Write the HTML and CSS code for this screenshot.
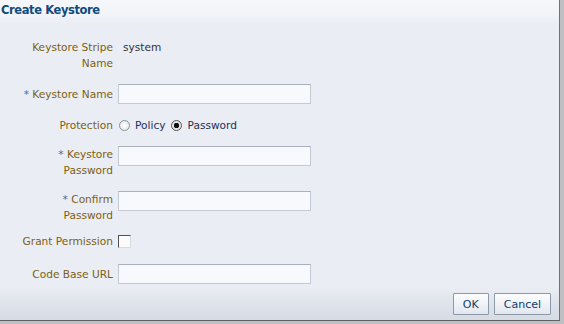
FILE: index.html
```html
<!DOCTYPE html>
<html lang="en">
<head>
  <meta charset="UTF-8">
  <title>Create Keystore</title>
  <link rel="stylesheet" href="styles.css">
</head>
<body>
  <div class="dialog">
    <div class="dialog-header">
      <h1>Create Keystore</h1>
    </div>

    <div class="form">
      <label class="label two-line">Keystore Stripe Name</label>
      <div class="value">system</div>

      <label class="label"><span class="req">*</span> Keystore Name</label>
      <div class="field"><input type="text" class="text-input"></div>

      <label class="label">Protection</label>
      <div class="field radios">
        <span class="radio"></span><span class="radio-text">Policy</span>
        <span class="radio checked"></span><span class="radio-text">Password</span>
      </div>

      <label class="label two-line"><span class="req">*</span> Keystore<br>Password</label>
      <div class="field top"><input type="password" class="text-input"></div>

      <label class="label two-line"><span class="req">*</span> Confirm<br>Password</label>
      <div class="field top"><input type="password" class="text-input"></div>

      <label class="label raised">Grant Permission</label>
      <div class="field raised"><span class="checkbox"></span></div>

      <label class="label">Code Base URL</label>
      <div class="field"><input type="text" class="text-input"></div>
    </div>

    <div class="dialog-footer">
      <button class="btn btn-ok">OK</button>
      <button class="btn">Cancel</button>
    </div>
  </div>
</body>
</html>
```

FILE: styles.css
```css
body {
  margin: 0;
  background-color: #bdbfc3;
  font-family: 'DejaVu Sans', Tahoma, sans-serif;
  font-size: 10.6px;
}
.dialog {
  width: 559px;
  height: 320px;
  display: flex;
  flex-direction: column;
  background-color: #eaedf4;
  border-right: 1px solid #6f7378;
  border-bottom: 1px solid #5f6166;
}
.dialog-header {
  height: 24px;
  background: linear-gradient(#f6f7fa, #f2f4f8 60%, #eaedf4);
}
h1 {
  margin: 0;
  padding: 3px 0 0 1px;
  font-size: 11.5px;
  font-weight: bold;
  letter-spacing: -0.4px;
  color: #0f4a7c;
  line-height: 14px;
}
.form {
  flex: 1;
  display: grid;
  grid-template-columns: 113px 193px;
  column-gap: 5px;
  row-gap: 13px;
  align-content: start;
  padding-top: 15px;
}
.label {
  text-align: right;
  color: #7d5f12;
  line-height: 16px;
  align-self: center;
}
.label.two-line {
  align-self: start;
  padding-left: 24px;
}
.raised {
  margin-top: -3px;
  margin-bottom: 2px;
}
.req {
  color: #3b6fa8;
}
.value {
  color: #333;
  line-height: 16px;
  padding-left: 5px;
}
.field {
  display: flex;
  align-items: center;
}
.field.top {
  align-self: start;
}
.text-input {
  box-sizing: border-box;
  width: 193px;
  height: 20px;
  margin: 0;
  border: 1px solid #c4cad3;
  border-top-color: #a9b0bb;
  background-color: #f8f9fc;
}
.radios {
  line-height: 16px;
  color: #23305a;
}
.radio {
  box-sizing: border-box;
  width: 11px;
  height: 11px;
  border-radius: 50%;
  border: 1px solid #8a8f96;
  background: radial-gradient(#ffffff, #dfe2e7);
  margin-left: 1px;
  margin-right: 5px;
}
.radio.checked {
  border-color: #555;
  background: radial-gradient(#111 0, #111 2.5px, #e4e6ea 3px);
}
.radio-text {
  margin-right: 5px;
}
.checkbox {
  box-sizing: border-box;
  width: 13px;
  height: 13px;
  border: 1px solid #d8dbe0;
  border-top-color: #4f5257;
  border-left-color: #4f5257;
  background-color: #fbfbfc;
}
.dialog-footer {
  height: 32px;
  display: flex;
  justify-content: flex-end;
  align-items: center;
  gap: 5px;
  padding-right: 8px;
  background: linear-gradient(#eaedf4, #e2e6ed 30%, #d6dbe4);
}
.btn {
  height: 22px;
  padding: 0 9px;
  font-family: 'DejaVu Sans', Tahoma, sans-serif;
  font-size: 11px;
  color: #0e3d70;
  border: 1px solid #8c99a8;
  border-radius: 1px;
  background: linear-gradient(#fdfdfe, #eef1f6 55%, #e2e7ef);
}
.btn-ok {
  width: 36px;
  padding: 0;
}
```
